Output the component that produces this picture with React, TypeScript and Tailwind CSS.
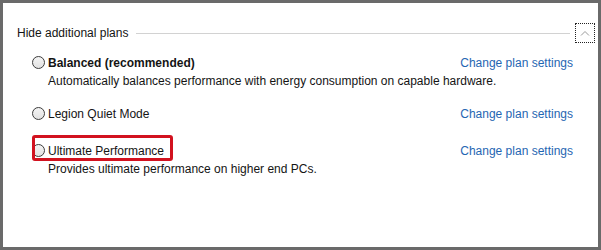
import React from 'react';

type Plan = {
  name: string;
  desc?: string;
  bold?: boolean;
  highlight?: boolean;
  mt: string;
};

const plans: Plan[] = [
  {
    name: 'Balanced (recommended)',
    desc: 'Automatically balances performance with energy consumption on capable hardware.',
    bold: true,
    mt: 'mt-[10px]',
  },
  { name: 'Legion Quiet Mode', mt: 'mt-[13px]' },
  {
    name: 'Ultimate Performance',
    desc: 'Provides ultimate performance on higher end PCs.',
    highlight: true,
    mt: 'mt-[18px]',
  },
];

function Radio() {
  return (
    <span className="w-[13px] h-[13px] rounded-full border border-[#3c3c3c] bg-gradient-to-b from-[#f4f4f4] to-[#e2e2e2] shrink-0" />
  );
}

function PlanRow({ plan }: { plan: Plan }) {
  return (
    <div className={plan.mt}>
      <div className="relative flex items-center h-[19px]">
        <Radio />
        <span className={'ml-[3px] ' + (plan.bold ? 'font-bold' : '')}>{plan.name}</span>
        <a className="ml-auto text-[#1f66b2] cursor-pointer">Change plan settings</a>
        {plan.highlight && (
          <div className="absolute left-0 -top-[6px] w-[141px] h-[26px] border-[3px] border-[#d2121f] rounded-[3px] pointer-events-none" />
        )}
      </div>
      {plan.desc && <div className="pl-[16px] h-[19px] leading-[19px]">{plan.desc}</div>}
    </div>
  );
}

export default function App() {
  return (
    <div className="w-[601px] h-[250px] bg-white border-[3px] border-[#6a6a6a] font-['Liberation_Sans',Arial,sans-serif] text-[12px] text-[#141414] pl-[14px] pr-[3px] pt-[20px]">
      {/* group header */}
      <div className="flex items-center h-[20px]">
        <span>Hide additional plans</span>
        <div className="flex-1 h-px bg-[#d2d2d2] ml-[8px] mr-[5px]" />
        <button className="w-[20px] h-[20px] border border-dotted border-[#222] flex items-center justify-center">
          <svg width="10" height="6" viewBox="0 0 10 6" fill="none">
            <path d="M1 5.5 L5 1.5 L9 5.5" stroke="#9a9a9a" strokeWidth="1" />
          </svg>
        </button>
      </div>

      {/* plan list */}
      <div className="pl-[15px] pr-[22px]">
        {plans.map((p) => (
          <PlanRow key={p.name} plan={p} />
        ))}
      </div>
    </div>
  );
}
